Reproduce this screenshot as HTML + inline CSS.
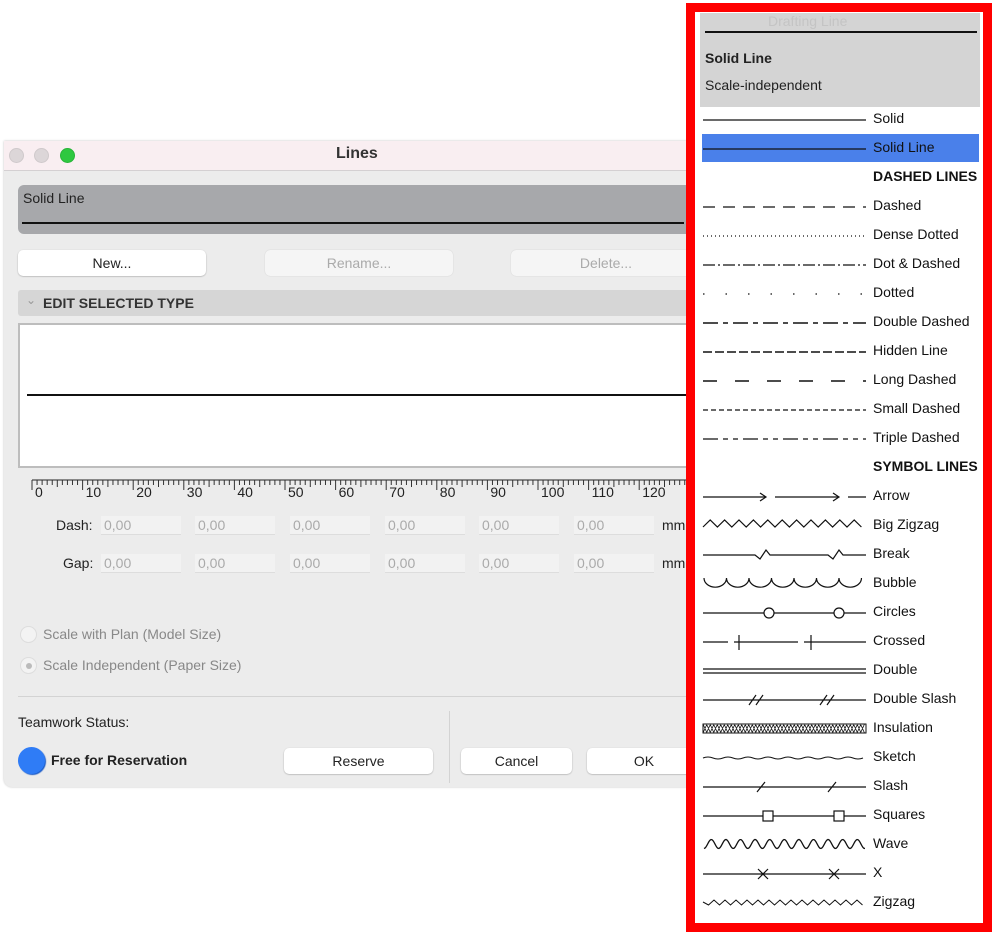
<!DOCTYPE html>
<html><head><meta charset="utf-8">
<style>
*{margin:0;padding:0;box-sizing:border-box}
body{width:999px;height:938px;background:#fff;position:relative;overflow:hidden;font-family:"Liberation Sans",sans-serif;color:#222}
.a{position:absolute}
.dlg{left:4px;top:141px;width:700px;height:646px;background:#ececec;border-radius:0 0 8px 8px;box-shadow:0 0 2px rgba(0,0,0,.25)}
.tb{left:0;top:0;width:700px;height:30px;background:#f9eef1;border-bottom:1px solid #d4d0d2}
.dot{width:15px;height:15px;border-radius:50%;top:7px;background:#dcd6d8;border:1px solid #cfc9cb}
.btn{height:26px;border-radius:5px;background:#fff;box-shadow:0 0.5px 1.5px rgba(0,0,0,.3);font-size:14px;text-align:center;line-height:26px}
.dis{background:#f5f5f5;color:#aaa;box-shadow:0 0 1px rgba(0,0,0,.2)}
.fld{height:19px;width:80px;background:#f2f2f2;border-bottom:1px solid #ddd;color:#aaa;font-size:14px;padding-left:3px;line-height:19px}
.lbl{font-size:14px}
</style></head><body>
<div class="a dlg">
  <div class="a tb"></div>
  <div class="a dot" style="left:5px"></div>
  <div class="a dot" style="left:30px"></div>
  <div class="a dot" style="left:56px;background:#2ec840;border-color:#27b438"></div>
  <div class="a" style="left:332px;top:4px;font-size:16px;font-weight:bold;color:#333">Lines</div>
  <div class="a" style="left:14px;top:44px;width:690px;height:49px;background:#a7a8ab;border-radius:6px"></div>
  <div class="a lbl" style="left:19px;top:49px">Solid Line</div>
  <div class="a" style="left:18px;top:81px;width:662px;height:1.5px;background:#111"></div>
  <div class="a btn" style="left:14px;top:109px;width:188px">New...</div>
  <div class="a btn dis" style="left:261px;top:109px;width:188px">Rename...</div>
  <div class="a btn dis" style="left:507px;top:109px;width:190px">Delete...</div>
  <div class="a" style="left:14px;top:149px;width:690px;height:26px;background:#d6d6d6;border-radius:3px"></div>
  <div class="a" style="left:22px;top:152px;font-size:12px;color:#999">&#8964;</div>
  <div class="a" style="left:39px;top:154px;font-size:14px;font-weight:bold;color:#333">EDIT SELECTED TYPE</div>
  <div class="a" style="left:14px;top:182px;width:690px;height:145px;background:#fff;border:2px solid #bdbdbd;border-right:none"></div>
  <div class="a" style="left:23px;top:253px;width:670px;height:2px;background:#111"></div>
  <svg class="a" style="left:0;top:320px" width="700" height="30" id="ruler"></svg>
  <div class="a lbl" style="left:52px;top:376px">Dash:</div>
  <div class="a lbl" style="left:59px;top:414px">Gap:</div>
  <div class="a fld" style="left:97px;top:375px">0,00</div><div class="a fld" style="left:191px;top:375px">0,00</div><div class="a fld" style="left:286px;top:375px">0,00</div><div class="a fld" style="left:381px;top:375px">0,00</div><div class="a fld" style="left:475px;top:375px">0,00</div><div class="a fld" style="left:570px;top:375px">0,00</div>
  <div class="a fld" style="left:97px;top:413px">0,00</div><div class="a fld" style="left:191px;top:413px">0,00</div><div class="a fld" style="left:286px;top:413px">0,00</div><div class="a fld" style="left:381px;top:413px">0,00</div><div class="a fld" style="left:475px;top:413px">0,00</div><div class="a fld" style="left:570px;top:413px">0,00</div>
  <div class="a lbl" style="left:658px;top:376px">mm</div><div class="a lbl" style="left:658px;top:414px">mm</div>
  <div class="a" style="left:16px;top:485px;width:17px;height:17px;border-radius:50%;background:#f3f3f3;border:1px solid #ddd"></div>
  <div class="a lbl" style="left:39px;top:485px;color:#888">Scale with Plan (Model Size)</div>
  <div class="a" style="left:16px;top:516px;width:17px;height:17px;border-radius:50%;background:#f3f3f3;border:1px solid #ddd"></div>
  <div class="a" style="left:22px;top:522px;width:6px;height:6px;border-radius:50%;background:#bbb"></div>
  <div class="a lbl" style="left:39px;top:516px;color:#888">Scale Independent (Paper Size)</div>
  <div class="a" style="left:14px;top:555px;width:690px;height:1px;background:#d3d3d3"></div>
  <div class="a lbl" style="left:14px;top:573px">Teamwork Status:</div>
  <div class="a" style="left:445px;top:570px;width:1px;height:72px;background:#d3d3d3"></div>
  <div class="a" style="left:14px;top:606px;width:27px;height:27px;border-radius:50%;background:#2f7cf6;box-shadow:1px 1px 1px #1a5bc8"></div>
  <div class="a" style="left:47px;top:611px;font-size:14px;font-weight:bold">Free for Reservation</div>
  <div class="a btn" style="left:280px;top:607px;width:149px">Reserve</div>
  <div class="a btn" style="left:457px;top:607px;width:111px">Cancel</div>
  <div class="a btn" style="left:583px;top:607px;width:114px">OK</div>
</div>

<div class="a" style="left:686px;top:3px;width:306px;height:929px;border:9px solid #ff0000;background:#fff"></div>
<div class="a" style="left:700px;top:13px;width:280px;height:94px;background:#d4d4d4"></div>
<div class="a" style="left:768px;top:13px;font-size:14px;color:#c4c4c4">Drafting Line</div>
<div class="a" style="left:705px;top:31px;width:272px;height:2px;background:#111"></div>
<div class="a" style="left:705px;top:50px;font-size:14px;font-weight:bold">Solid Line</div>
<div class="a" style="left:705px;top:77px;font-size:14px">Scale-independent</div>
<div class="a" style="left:702px;top:134px;width:277px;height:28px;background:#4a80ea"></div>
<svg class="a" style="left:0;top:0" width="999" height="938" id="lines"></svg>
<div id="labels"></div>
<script>
var names=["Solid","Solid Line","DASHED LINES","Dashed","Dense Dotted","Dot & Dashed","Dotted","Double Dashed","Hidden Line","Long Dashed","Small Dashed","Triple Dashed","SYMBOL LINES","Arrow","Big Zigzag","Break","Bubble","Circles","Crossed","Double","Double Slash","Insulation","Sketch","Slash","Squares","Wave","X","Zigzag"];
var L=document.getElementById('labels'),h='';
names.forEach(function(n,i){var y=118+29*i;var b=(n==="DASHED LINES"||n==="SYMBOL LINES");
h+='<div class="a" style="left:873px;top:'+(y-8)+'px;font-size:14px;'+(b?'font-weight:bold;':'')+'color:#111">'+n.replace('&','&amp;')+'</div>';});
L.innerHTML=h;
var s='',x0=703,x1=866;
function ln(y,da,w){s+='<line x1="'+x0+'" y1="'+y+'" x2="'+x1+'" y2="'+y+'" stroke="#111" stroke-width="'+(w||1.3)+'"'+(da?' stroke-dasharray="'+da+'"':'')+'/>';}
function p(d,w){s+='<path d="'+d+'" fill="none" stroke="#111" stroke-width="'+(w||1.2)+'"/>';}
function Y(i){return 120+29*i;}
ln(Y(0));ln(Y(1));
ln(Y(3),"12 8");ln(Y(4),"1 3",1.2);ln(Y(5),"12 3 2 3");ln(Y(6),"1.5 21",1.3);
ln(Y(7),"15 5 5 5",1.6);ln(Y(8),"9 3",1.5);ln(Y(9),"14 18",1.5);ln(Y(10),"5 3");ln(Y(11),"15 5 5 5 5 5");
var y=Y(13);p('M703 '+y+'H766M760 '+(y-4)+'L766 '+y+'L760 '+(y+4)+'M775 '+y+'H839M833 '+(y-4)+'L839 '+y+'L833 '+(y+4)+'M848 '+y+'H866');
y=Y(14);var d='M703 '+(y+1);var up=true;for(var x=703;x<860;x+=7.2){var x2=x+7.2;d+='L'+x2+' '+(up?y-6:y+1);up=!up;}p(d);
y=Y(15);p('M703 '+y+'H755L760 '+(y+4)+'L766 '+(y-5)+'L770 '+y+'H828L833 '+(y+4)+'L839 '+(y-5)+'L843 '+y+'H866');
y=Y(16);d='M704 '+(y-6);for(var x=704;x<860;x+=22.5){d+='A11 9 0 0 0 '+(x+22.5)+' '+(y-6);}p(d);
y=Y(17);p('M703 '+y+'H764M774 '+y+'H834M844 '+y+'H866');s+='<circle cx="769" cy="'+y+'" r="5" fill="#fff" stroke="#111" stroke-width="1.2"/><circle cx="839" cy="'+y+'" r="5" fill="#fff" stroke="#111" stroke-width="1.2"/>';
y=Y(18);p('M703 '+y+'H728M734 '+y+'H798M804 '+y+'H866M739 '+(y-7)+'V'+(y+8)+'M811 '+(y-7)+'V'+(y+8));
y=Y(19);p('M703 '+(y-2)+'H866M703 '+(y+2)+'H866');
y=Y(20);p('M703 '+y+'H866M749 '+(y+5)+'L756 '+(y-5)+'M756 '+(y+5)+'L763 '+(y-5)+'M820 '+(y+5)+'L827 '+(y-5)+'M827 '+(y+5)+'L834 '+(y-5));
y=Y(21);s+='<rect x="703" y="'+(y-5)+'" width="163" height="9" fill="none" stroke="#111" stroke-width="1"/>';d='';for(var x=703;x<862;x+=3.5){d+='M'+x+' '+(y-5)+'L'+(x+4)+' '+(y+4)+'M'+(x+4)+' '+(y-5)+'L'+x+' '+(y+4);}p(d,0.8);
y=Y(22);d='M703 '+y;for(var x=703;x<860;x+=10){d+='Q'+(x+5)+' '+(y+(x%20<10?-2:2))+' '+(x+10)+' '+y;}p(d,1);
y=Y(23);p('M703 '+y+'H866M757 '+(y+5)+'L765 '+(y-5)+'M828 '+(y+5)+'L836 '+(y-5));
y=Y(24);p('M703 '+y+'H866');s+='<rect x="763" y="'+(y-5)+'" width="10" height="10" fill="#fff" stroke="#111" stroke-width="1.2"/><rect x="834" y="'+(y-5)+'" width="10" height="10" fill="#fff" stroke="#111" stroke-width="1.2"/>';
y=Y(25);d='';for(var x=704;x<=865;x+=1){var v=y-1+4.5*Math.cos((x-704)/14.6*2*Math.PI);d+=(x==704?'M':'L')+x+' '+v.toFixed(2);}p(d,1.3);
y=Y(26);p('M703 '+y+'H866M758 '+(y-5)+'L768 '+(y+5)+'M768 '+(y-5)+'L758 '+(y+5)+'M829 '+(y-5)+'L839 '+(y+5)+'M839 '+(y-5)+'L829 '+(y+5));
y=Y(27);d='M703 '+(y-1);up=false;for(var x=703;x<861;x+=5.5){d+='L'+(x+5.5)+' '+(up?y-3:y+2);up=!up;}p(d,1);
document.getElementById('lines').innerHTML=s;
var r='',rx0=28,st=5.06;r+='<line x1="'+rx0+'" y1="19" x2="696" y2="19" stroke="#222" stroke-width="1"/>';
for(var i=0;i<=132;i++){var x=rx0+i*st;var m=i%10==0;r+='<line x1="'+x+'" y1="19" x2="'+x+'" y2="'+(m?29:(i%5==0?26:24))+'" stroke="#333" stroke-width="1"/>';}
document.getElementById('ruler').innerHTML=r;
var rl='';for(var i=0;i<=12;i++){var x=4+rx0+i*50.6;rl+='<div class="a" style="left:'+(x+3)+'px;top:484px;font-size:14px">'+(i*10)+'</div>';}
L.innerHTML+=rl;
</script>
</body></html>
